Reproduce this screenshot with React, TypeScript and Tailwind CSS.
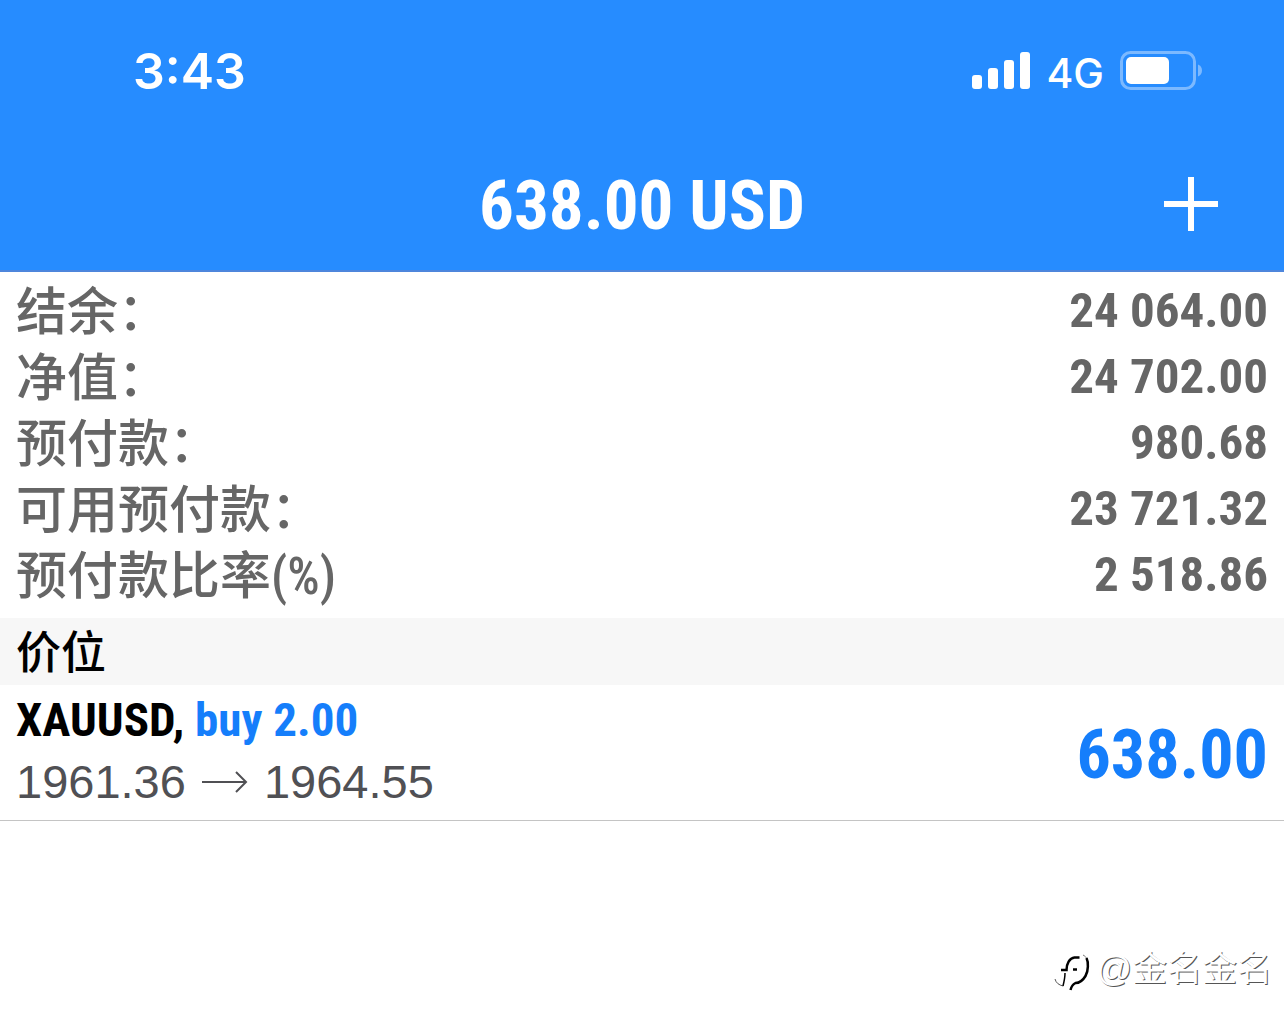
import React from "react";

const account = [
  { label: "结余：", value: "24 064.00" },
  { label: "净值：", value: "24 702.00" },
  { label: "预付款：", value: "980.68" },
  { label: "可用预付款：", value: "23 721.32" },
  { label: "预付款比率(%)", value: "2 518.86" },
];

function SignalIcon() {
  return (
    <svg width="58" height="38" viewBox="0 0 58 38" fill="currentColor" aria-hidden="true">
      <rect x="0" y="23" width="10" height="14" rx="3" />
      <rect x="16" y="16" width="10" height="21" rx="3" />
      <rect x="32" y="8" width="10" height="29" rx="3" />
      <rect x="48" y="0" width="10" height="37" rx="3" />
    </svg>
  );
}

function BatteryIcon() {
  return (
    <svg width="82" height="40" viewBox="0 0 82 40" fill="none" aria-hidden="true">
      <rect x="1.5" y="1.5" width="73" height="36" rx="9" stroke="#7cb9ff" strokeWidth="3" />
      <rect x="6" y="6" width="43" height="27" rx="5" fill="#fff" />
      <path d="M78 13.5c2.600 1 4 3.200 4 6s-1.400 5-4 6z" fill="#7cb9ff" />
    </svg>
  );
}

function WatermarkLogo() {
  return (
    <svg width="38" height="48" viewBox="0 0 38 48" fill="none" stroke="#000" aria-hidden="true">
      <path d="M1 34c1 4 4 6 8 7" stroke="#555" strokeWidth="1" />
      <path d="M9 41c1-4 2-8 2-13" strokeWidth="1.500" />
      <path d="M7 25h5.500c0-6 3-12 8-12.500h5" strokeWidth="2.500" />
      <path d="M19 24.500h4" strokeWidth="2.500" />
      <path d="M29 10c2 1 3 2 4 4" stroke="#777" strokeWidth="1" />
      <path d="M32.500 13c2 4 2 13-1 18-3 5-6 7-10 7-2 1-4 3-5 7" strokeWidth="2.500" />
    </svg>
  );
}

export default function App() {
  return (
    <div className="flex min-h-screen flex-col bg-white font-['Roboto_Condensed','Noto_Sans_CJK_SC',sans-serif]">
      <header className="border-b-2 border-[#4d86dc] bg-[#268cff] text-white">
        <div className="flex h-[142px] items-center justify-between pl-[133px] pr-[82px] font-['Inter',sans-serif]">
          <time className="text-[50px] leading-none font-semibold">3:43</time>
          <div className="flex items-center gap-4">
            <SignalIcon />
            <span className="pt-1 text-[41px] leading-none font-medium">4G</span>
            <BatteryIcon />
          </div>
        </div>
        <div className="grid h-[128px] grid-cols-[1fr_auto_1fr] items-center pb-1">
          <h1 className="col-start-2 pt-1 text-[69px] leading-[120px] font-bold">638.00 USD</h1>
          <button type="button" aria-label="Add" className="mr-[65px] justify-self-end">
            <svg width="56" height="56" viewBox="0 0 56 56" stroke="currentColor" strokeWidth="6" aria-hidden="true">
              <path d="M1 28h54M28 1v54" />
            </svg>
          </button>
        </div>
      </header>
      <main>
        <dl className="px-4 pt-[6px] pb-[10px] text-[#666]">
          {account.map((row) => (
            <div key={row.label} className="flex h-[66px] items-center justify-between leading-[62px]">
              <dt className="pt-1 text-[51px] font-medium">{row.label}</dt>
              <dd className="text-[49px] font-bold">{row.value}</dd>
            </div>
          ))}
        </dl>
        <h2 className="bg-[#f7f7f7] px-4 pt-1 text-[45px] leading-[63px] font-medium text-black">价位</h2>
        <section className="flex h-[136px] items-center justify-between border-b border-[#c4c4c4] px-4">
          <div className="pb-1">
            <p className="text-[47px] leading-[62px] font-bold text-black">
              XAUUSD, <span className="text-[#157efb]">buy 2.00</span>
            </p>
            <p className="flex items-center gap-4 font-['Liberation_Sans',sans-serif] text-[47px] leading-[62px] text-[#505054]">
              <span>1961.36</span>
              <svg width="46" height="24" viewBox="0 0 46 24" fill="none" stroke="currentColor" strokeWidth="2" role="img" aria-label="to">
                <path d="M0 12h44M34 2l10 10-10 10" />
              </svg>
              <span>1964.55</span>
            </p>
          </div>
          <strong className="pt-1 text-[68px] leading-none font-bold text-[#157efb]">638.00</strong>
        </section>
      </main>
      <footer className="mt-auto flex items-center justify-end pr-3 pb-[34px]">
        <WatermarkLogo />
        <span className="ml-1 font-['Liberation_Sans','Noto_Sans_CJK_SC',sans-serif] text-[35px] leading-[52px] text-white [text-shadow:1px_1px_0_#555]">
          @金名金名
        </span>
      </footer>
    </div>
  );
}
